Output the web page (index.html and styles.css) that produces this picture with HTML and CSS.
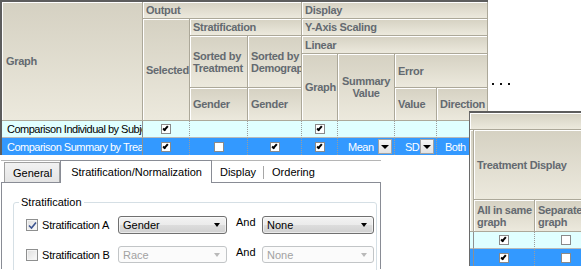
FILE: index.html
```html
<!DOCTYPE html>
<html lang="en">
<head>
    <meta charset="UTF-8">
    <title>Graph output settings</title>
    <link rel="stylesheet" href="styles.css">
</head>
<body>
    <div class="canvas">
        <!-- main output grid -->
        <div class="grid">
            <div class="hd h-graph">Graph</div>
            <div class="hd h-output">Output</div>
            <div class="hd h-display">Display</div>
            <div class="hd h-selected">Selected</div>
            <div class="hd h-strat">Stratification</div>
            <div class="hd h-yaxis">Y-Axis Scaling</div>
            <div class="hd h-sort1">Sorted by Treatment</div>
            <div class="hd h-sort2">Sorted by Demographics</div>
            <div class="hd h-linear">Linear</div>
            <div class="hd h-g2">Graph</div>
            <div class="hd h-sum">Summary Value</div>
            <div class="hd h-error">Error</div>
            <div class="hd h-gen1">Gender</div>
            <div class="hd h-gen2">Gender</div>
            <div class="hd h-val">Value</div>
            <div class="hd h-dir">Direction</div>

            <div class="td r1 name">Comparison Individual by Subject</div>
            <div class="td r1"><span class="cb on"></span></div>
            <div class="td r1"></div>
            <div class="td r1"></div>
            <div class="td r1"><span class="cb on"></span></div>
            <div class="td r1"></div>
            <div class="td r1"></div>
            <div class="td r1"></div>

            <div class="td r2 name">Comparison Summary by Treatment</div>
            <div class="td r2"><span class="cb on"></span></div>
            <div class="td r2"><span class="cb"></span></div>
            <div class="td r2"><span class="cb on"></span></div>
            <div class="td r2"><span class="cb on"></span></div>
            <div class="td r2 pick"><span class="pick-val mean">Mean</span><span class="dd"></span></div>
            <div class="td r2 pick"><span class="pick-val sd">SD</span><span class="dd"></span></div>
            <div class="td r2 left">Both</div>
        </div>

        <div class="dots"><i></i><i></i><i></i></div>

        <!-- second part of the grid, further right -->
        <div class="side">
            <div class="hd s-top"></div>
            <div class="hd s-edge"></div>
            <div class="hd s-treat">Treatment Display</div>
            <div class="hd s-all">All in same graph</div>
            <div class="hd s-sep">Separate graph</div>

            <div class="td r1 edge"></div>
            <div class="td r1"><span class="cb on"></span></div>
            <div class="td r1"><span class="cb"></span></div>
            <div class="td r2 edge"></div>
            <div class="td r2"><span class="cb on"></span></div>
            <div class="td r2"><span class="cb"></span></div>
        </div>

        <!-- settings dialog -->
        <div class="dialog">
            <div class="tabs">
                <span class="tab first">General</span>
                <span class="tab sel">Stratification/Normalization</span>
                <span class="tab flat">Display</span>
                <span class="tab-sep"></span>
                <span class="tab flat">Ordering</span>
            </div>
            <div class="panel">
                <div class="group">
                    <span class="group-title">Stratification</span>
                    <div class="strat">
                        <span class="chk on">
                            <svg width="9" height="9" viewBox="0 0 9 9"><path d="M1 4.5 L3.5 7 L8 1.5" fill="none" stroke="#3d5490" stroke-width="1.6"/></svg>
                        </span>
                        <span class="lbl">Stratification A</span>
                        <div class="combo">Gender</div>
                        <span class="and">And</span>
                        <div class="combo">None</div>

                        <span class="chk"></span>
                        <span class="lbl">Stratification B</span>
                        <div class="combo off">Race</div>
                        <span class="and">And</span>
                        <div class="combo off">None</div>
                    </div>
                </div>
            </div>
        </div>
    </div>
</body>
</html>
```

FILE: styles.css
```css
*,::after,::before{margin:0; box-sizing:border-box;}
body{margin:0; background:#fff; font-family:"Liberation Sans", Arial, sans-serif;}
.canvas{width:581px; height:270px; position:relative; overflow:hidden; background:#fff;}

/* grid */
.grid{display:grid; width:max-content; grid-template-columns:141px 47px 58px 54px 36px 57px 42px 51px; grid-template-rows:17px 17px 18px 34px 33px 17px 17px; border-top:2px solid #5d5d5d; border-left:2px solid #5d5d5d;}
.hd{display:flex; align-items:center; padding:0 0 0 3px; overflow:hidden; background:linear-gradient(#d5d1c2, #ece9dd); border-right:1px solid #aca899; border-bottom:1px solid #aca899; box-shadow:inset 1px 1px 0 #fff; font:bold 11px/12px "Liberation Sans", Arial, sans-serif; letter-spacing:-0.3px; color:#646a70;}
.h-graph{grid-column:1; grid-row:1/6; padding-left:4px;}
.h-output{grid-column:2/5; grid-row:1;}
.h-display{grid-column:5/9; grid-row:1;}
.h-selected{grid-column:2; grid-row:2/6;}
.h-strat{grid-column:3/5; grid-row:2;}
.h-yaxis{grid-column:5/9; grid-row:2;}
.h-sort1{grid-column:3; grid-row:3/5;}
.h-sort2{grid-column:4; grid-row:3/5;}
.h-linear{grid-column:5/9; grid-row:3;}
.h-g2{grid-column:5; grid-row:4/6;}
.h-sum{grid-column:6; grid-row:4/6; justify-content:center; text-align:center; padding:0 2px;}
.h-error{grid-column:7/9; grid-row:4;}
.h-gen1{grid-column:3; grid-row:5;}
.h-gen2{grid-column:4; grid-row:5;}
.h-val{grid-column:7; grid-row:5;}
.h-dir{grid-column:8; grid-row:5;}

.td{display:flex; align-items:center; justify-content:center; border-right:1px dotted #9c9c9c; border-bottom:1px solid #b9b9b9; font-size:11px; letter-spacing:-0.5px; white-space:nowrap; overflow:hidden;}
.r1{background:#e0ffff; color:#000;}
.r2{background:#3399ff; color:#fff; border-bottom:0;}
.td.name{justify-content:flex-start; padding-left:5px; border-right:1px solid #8f8f8f;}
.td.left{justify-content:flex-start; padding-left:8px;}
.td.pick{justify-content:space-between; padding-right:2px;}
.pick-val.mean{padding-left:10px;}
.pick-val.sd{padding-left:10px;}

.cb{display:block; width:10px; height:10px; border:1px solid #8a8a8a; background:#fff; position:relative;}
.cb.on::after{content:""; position:absolute; left:2px; top:0; width:3px; height:6px; border:solid #000; border-width:0 2px 2px 0; transform:rotate(40deg);}
.dd{display:flex; align-items:center; justify-content:center; width:14px; height:15px; background:linear-gradient(#f7f7f7, #e2e2e2); border:1px solid #a3a3a3;}
.dd::after{content:""; border-left:4px solid transparent; border-right:4px solid transparent; border-top:4px solid #000;}

.dots{position:absolute; left:492px; top:83px; display:flex; gap:6px;}
.dots i{display:block; width:2px; height:2px; background:#111;}

/* second grid, laid over the first */
.side{position:absolute; left:469px; top:111px; display:grid; grid-template-columns:4px 61px 62px; grid-template-rows:17px 70px 32px 17px 17px; border-top:2px solid #5d5d5d; border-left:1px solid #6a6a6a;}
.s-top{grid-column:1/4; grid-row:1;}
.s-edge{grid-column:1; grid-row:2/4; padding:0;}
.s-treat{grid-column:2/4; grid-row:2;}
.s-all{grid-column:2; grid-row:3;}
.s-sep{grid-column:3; grid-row:3;}
.td.edge{border-right:1px solid #8f8f8f;}

/* dialog */
.dialog{margin:5px 0 0 1px; width:380px; height:110px; font-size:11px; color:#000;}
.tabs{display:flex; align-items:flex-end; height:23px; padding-left:3px; border-top:1px solid #b5b5b5; border-bottom:1px solid #898c95;}
.tab{display:flex; align-items:center; height:20px; padding:0 7px 0 8px; white-space:nowrap;}
.tab.first{border:1px solid #a0a0a0; border-bottom:0; background:linear-gradient(#f2f2f2, #e4e4e4);}
.tab.sel{height:23px; margin-bottom:-1px; padding:0 9px 0 10px; background:#fff; border:1px solid #898c95; border-bottom:0;}
.tab.flat{padding:0 7px 0 8px;}
.tab-sep{width:1px; height:13px; margin-bottom:3px; background:#a7a7a7;}
.panel{height:86px; padding:19px 0 0 11px; background:#fff; border-left:1px solid #898c95; border-right:1px solid #898c95;}
.group{width:364px; height:90px; border:1px solid #d5dfe5; border-radius:3px;}
.group-title{display:block; width:max-content; margin:-8px 0 0 5px; padding:0 2px; background:#fff; line-height:14px;}
.strat{display:grid; grid-template-columns:16px 76px 109px 35px 112px; grid-template-rows:18px 17px; row-gap:12px; margin:7px 0 0 12px; align-items:center;}
.chk{display:flex; align-items:center; justify-content:center; width:12px; height:12px; border:1px solid #8e8f8f; background:linear-gradient(135deg, #dedede, #fbfbfb); box-shadow:inset 0 0 0 1px #f4f4f4;}
.lbl{letter-spacing:-0.2px;}
.and{align-self:start; padding-left:9px; line-height:13px;}
.combo{display:flex; align-items:center; justify-content:space-between; height:100%; padding:0 6px 0 4px; border:1px solid #707070; border-radius:3px; background:linear-gradient(#f3f3f3, #ebebeb 50%, #dddddd 51%, #d0d0d0); box-shadow:inset 0 0 0 1px rgba(255,255,255,.55);}
.combo::after{content:""; border-left:3.5px solid transparent; border-right:3.5px solid transparent; border-top:4px solid #000;}
.combo.off{border-color:#c2c5c7; background:#fbfbfb; color:#a2a2a2; box-shadow:none;}
.combo.off::after{border-top-color:#b9b9b9;}
```
